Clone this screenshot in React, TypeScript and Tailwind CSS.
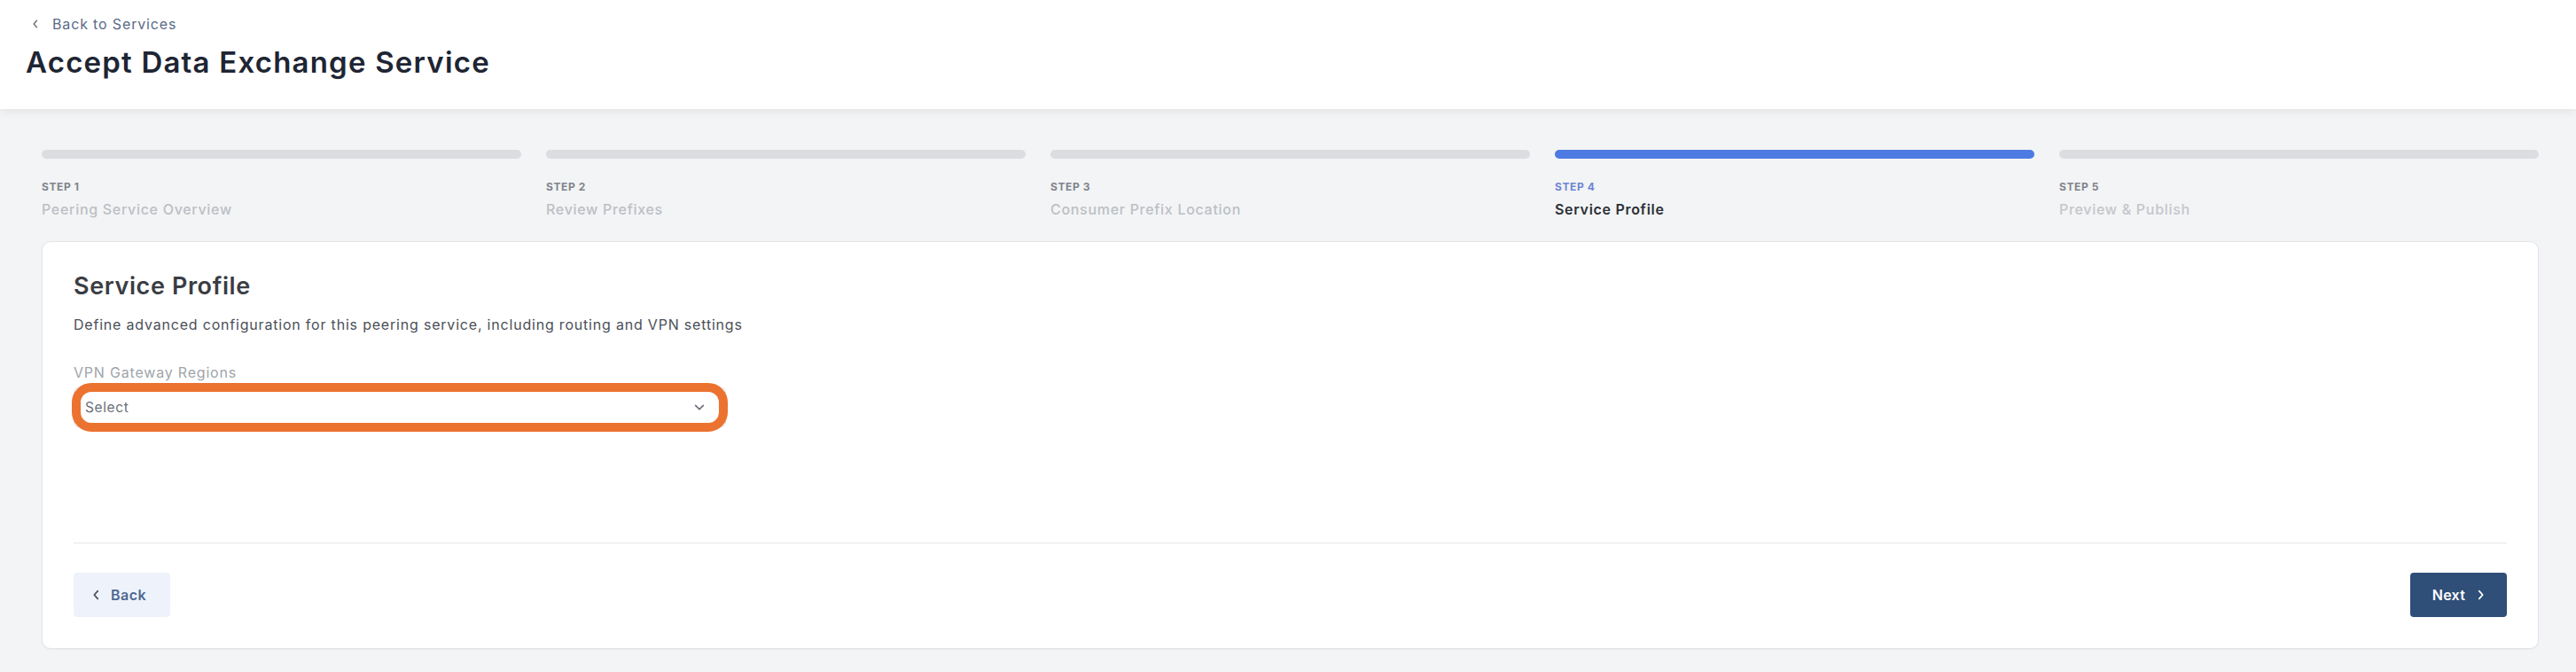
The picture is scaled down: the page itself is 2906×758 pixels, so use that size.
import React from "react";

const steps = [
  { n: "STEP 1", t: "Peering Service Overview", state: "done" },
  { n: "STEP 2", t: "Review Prefixes", state: "done" },
  { n: "STEP 3", t: "Consumer Prefix Location", state: "done" },
  { n: "STEP 4", t: "Service Profile", state: "active" },
  { n: "STEP 5", t: "Preview & Publish", state: "todo" },
];

function ChevronLeft({ className }: { className?: string }) {
  return (
    <svg viewBox="0 0 10 16" className={className} fill="none" stroke="currentColor" strokeWidth="2" strokeLinecap="round" strokeLinejoin="round">
      <path d="M7 3 L2.5 8 L7 13" />
    </svg>
  );
}
function ChevronRight({ className }: { className?: string }) {
  return (
    <svg viewBox="0 0 10 16" className={className} fill="none" stroke="currentColor" strokeWidth="2" strokeLinecap="round" strokeLinejoin="round">
      <path d="M3 3 L7.5 8 L3 13" />
    </svg>
  );
}
function ChevronDown({ className }: { className?: string }) {
  return (
    <svg viewBox="0 0 16 10" className={className} fill="none" stroke="currentColor" strokeWidth="2" strokeLinecap="round" strokeLinejoin="round">
      <path d="M3 2.5 L8 7.5 L13 2.5" />
    </svg>
  );
}

export default function App() {
  return (
    <div
      className="min-h-[758px] w-full bg-[#f3f4f5] text-[#1f2937]"
      style={{ fontFamily: "Inter, 'Noto Sans', sans-serif" }}
    >
      <header className="h-[123px] bg-white shadow-[0_3px_10px_rgba(0,0,0,0.07)] pl-[29px] pt-[17px] relative z-10">
        <a className="flex items-center h-[20px] pl-[7px] text-[#5b6a88] text-[16px] leading-[20px] tracking-[0.85px]">
          <ChevronLeft className="w-[8px] h-[12px] text-[#6b7280]" />
          <span className="ml-[15px]">Back to Services</span>
        </a>
        <h1 className="mt-[13px] text-[33px] leading-[40px] font-semibold text-[#1e2533] tracking-[1.2px]">
          Accept Data Exchange Service
        </h1>
      </header>

      <main className="pl-[47px] pr-[42px] pt-[46px] pb-[27px]">
        <div className="grid grid-cols-5 gap-x-[28px]">
          {steps.map((s) => (
            <div key={s.n} className="flex flex-col">
              <div
                className={
                  s.state === "active"
                    ? "h-[10px] rounded-full bg-[#4d7be3]"
                    : "h-[10px] rounded-full bg-[#dcdde0]"
                }
              />
              <div
                className={
                  s.state === "active"
                    ? "mt-[25px] text-[12px] leading-[14px] font-bold tracking-[0.6px] text-[#6e86d2]"
                    : "mt-[25px] text-[12px] leading-[14px] font-bold tracking-[0.6px] text-[#80848c]"
                }
              >
                {s.n}
              </div>
              <div
                className={
                  s.state === "active"
                    ? "mt-[8px] text-[16px] leading-[20px] font-semibold tracking-[0.7px] text-[#2b2f36]"
                    : s.state === "todo"
                    ? "mt-[8px] text-[16px] leading-[20px] font-medium tracking-[0.7px] text-[#c3c6cb]"
                    : "mt-[8px] text-[16px] leading-[20px] font-medium tracking-[0.7px] text-[#bcbfc5]"
                }
              >
                {s.t}
              </div>
            </div>
          ))}
        </div>

        <section className="mt-[26px] bg-white rounded-[10px] border border-[#e3e4e7] shadow-[0_1px_2px_rgba(0,0,0,0.04)] px-[35px] pt-[33px] pb-[35px]">
          <h2 className="text-[27px] leading-[34px] font-semibold tracking-[0.6px] text-[#3a3d44]">Service Profile</h2>
          <p className="mt-[16px] text-[16px] leading-[20px] tracking-[0.8px] text-[#4b5058]">
            Define advanced configuration for this peering service, including routing and VPN settings
          </p>
          <label className="block mt-[34px] text-[16px] leading-[20px] tracking-[0.8px] text-[#a0a4ab]">VPN Gateway Regions</label>
          <div className="relative mt-[7px] w-[736px] h-[45px]">
            <div className="h-full w-full rounded-[6px] border border-[#d9dbe0] bg-white flex items-center justify-between pl-[12px] pr-[22px]">
              <span className="text-[15.5px] tracking-[0.6px] text-[#6b6f78]">Select</span>
              <ChevronDown className="w-[14px] h-[9px] text-[#6f737b]" />
            </div>
            <div className="pointer-events-none absolute left-[-2px] right-[-2px] top-[-5px] bottom-[-5px] rounded-[22px] border-[10px] border-[#ec7230]" />
          </div>

          <div className="mt-[130px] h-px bg-[#e5e6e9]" />

          <div className="mt-[33px] flex items-center justify-between">
            <button className="flex items-center h-[50px] w-[109px] rounded-[4px] bg-[#eef2fa] pl-[21px] text-[16px] font-semibold tracking-[0.5px] text-[#4d6892]">
              <ChevronLeft className="w-[9px] h-[14px] text-[#4a4f58]" />
              <span className="ml-[12px]">Back</span>
            </button>
            <button className="flex items-center justify-center h-[50px] w-[109px] rounded-[4px] bg-[#2f4e78] text-[16px] font-semibold tracking-[0.3px] text-white">
              <span>Next</span>
              <ChevronRight className="ml-[13px] w-[9px] h-[14px] text-white" />
            </button>
          </div>
        </section>
      </main>
    </div>
  );
}
